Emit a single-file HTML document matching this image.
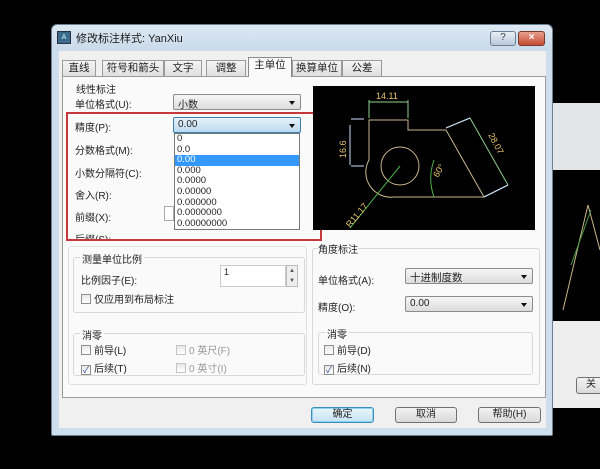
<!DOCTYPE html>
<html><head><meta charset="utf-8"><style>
*{margin:0;padding:0;box-sizing:border-box}
body{width:600px;height:469px;background:#000;position:relative;overflow:hidden;font-family:"Liberation Sans","Noto Sans CJK SC",sans-serif;font-size:10px;color:#222}
.a{position:absolute}
.lbl{position:absolute;font-size:10px;color:#222;white-space:nowrap}
.combo{position:absolute;height:16px;border:1px solid #8c8c8c;background:linear-gradient(#f6f6f6,#dcdcdc);font-size:10px;padding:1px 4px;border-radius:2px}
.combo:after{content:"";position:absolute;right:5px;top:6px;border:3px solid transparent;border-top:4px solid #111}
.grp{position:absolute;border:1px solid #d8d8d8;border-radius:3px}
.gt{position:absolute;background:#fafafa;padding:0 2px;font-size:10px;top:-7px;left:6px}
.cb{display:inline-block;width:10px;height:10px;border:1px solid #8f8f8f;background:linear-gradient(#e8e8e8,#fff);vertical-align:-1px;margin-right:3px;font-size:9px;line-height:8px;color:#2a4a9a;text-align:center}
.btn{position:absolute;height:16px;border:1px solid #707070;border-radius:3px;background:linear-gradient(#f2f2f2,#dadada);text-align:center;font-size:10px;line-height:14px}
.tab{position:absolute;top:60px;height:17px;border:1px solid #9a9a9a;border-bottom:none;background:linear-gradient(#f4f4f4,#dedede);font-size:10.5px;text-align:center;line-height:15px}
</style></head><body>
<!-- background window right -->
<div class="a" style="left:553px;top:103px;width:47px;height:67px;background:#e3e5e8"></div>
<div class="a" style="left:553px;top:170px;width:47px;height:151px;background:#000">
<svg width="47" height="151"><path d="M10 140 L35 35 L47 80" stroke="#c8b78a" fill="none"/><path d="M18 95 L38 40" stroke="#4a9a4a" fill="none"/></svg></div>
<div class="a" style="left:553px;top:321px;width:47px;height:87px;background:#eeeeee"></div>
<div class="btn" style="left:576px;top:377px;width:30px;height:17px">关</div>

<!-- dialog -->
<div class="a" style="left:51px;top:24px;width:502px;height:412px;background:#cfdeed;border:1px solid #6d7f92;border-radius:6px 6px 2px 2px"></div>
<div class="a" style="left:52px;top:25px;width:500px;height:26px;background:linear-gradient(#dde8f3,#c9daea);border-radius:6px 6px 0 0"></div>
<div class="a" style="left:57px;top:31px;width:14px;height:13px;background:#3c6a8a;border:1px solid #234;color:#cfe;font-size:7px;line-height:11px;text-align:center">A</div>
<div class="lbl" style="left:76px;top:30px;font-size:11px;color:#1a1a1a">修改标注样式: YanXiu</div>
<div class="a" style="left:490px;top:31px;width:26px;height:15px;border:1px solid #6d7f92;border-radius:3px;background:linear-gradient(#e8eef5,#b9c9da);text-align:center;font-size:10px;color:#345">?</div>
<div class="a" style="left:518px;top:31px;width:27px;height:15px;border:1px solid #7a3a2e;border-radius:3px;background:linear-gradient(#e9a08d,#c44c33);text-align:center;font-size:10px;color:#fff;font-weight:bold">×</div>
<div class="a" style="left:59px;top:51px;width:487px;height:377px;background:#f0f0f0"></div>

<!-- tabs -->
<div class="tab" style="left:62px;width:34px">直线</div>
<div class="tab" style="left:102px;width:62px">符号和箭头</div>
<div class="tab" style="left:164px;width:38px">文字</div>
<div class="tab" style="left:206px;width:40px">调整</div>
<div class="tab" style="left:292px;width:50px">换算单位</div>
<div class="tab" style="left:342px;width:40px">公差</div>
<!-- panel -->
<div class="a" style="left:62px;top:76px;width:484px;height:322px;background:#fafafa;border:1px solid #9a9a9a"></div>
<div class="tab" style="left:248px;top:57px;width:44px;height:20px;background:#fafafa;border-color:#8a8a8a">主单位</div>

<!-- left upper -->
<div class="lbl" style="left:76px;top:81px">线性标注</div>
<div class="lbl" style="left:75px;top:96px">单位格式(U):</div>
<div class="combo" style="left:173px;top:94px;width:128px">小数</div>
<div class="lbl" style="left:75px;top:119px">精度(P):</div>
<div class="lbl" style="left:75px;top:142px">分数格式(M):</div>
<div class="lbl" style="left:75px;top:165px">小数分隔符(C):</div>
<div class="lbl" style="left:75px;top:187px">舍入(R):</div>
<div class="lbl" style="left:75px;top:209px">前缀(X):</div>
<div class="a" style="left:164px;top:206px;width:10px;height:15px;border:1px solid #aaa;background:#fff"></div>
<div class="lbl" style="left:75px;top:231px;height:8px;overflow:hidden">后缀(S):</div>
<div class="combo" style="left:173px;top:117px;width:128px;background:linear-gradient(#e6f2fb,#bcd9f0);border-color:#3c7fb1">0.00</div>
<div class="a" style="left:174px;top:133px;width:126px;height:97px;background:#fff;border:1px solid #777;font-size:9.5px;line-height:10.6px;padding-left:2px">
0<br>0.0<br><span style="display:block;background:#3399ff;color:#fff;margin-left:-2px;padding-left:2px">0.00</span>0.000<br>0.0000<br>0.00000<br>0.000000<br>0.0000000<br>0.00000000</div>
<div class="a" style="left:66px;top:112px;width:256px;height:129px;border:2px solid #c8383a"></div>

<!-- preview -->
<div class="a" style="left:313px;top:86px;width:222px;height:144px;background:#000">
<svg width="222" height="144" viewBox="313 86 222 144">
<g fill="none" stroke-width="1">
<path d="M369 120 L369 160 A25 25 0 0 0 394 197 L484 197 L446 130 L408 130 L408 120 Z" stroke="#c9b68c"/>
<circle cx="400" cy="166" r="19" stroke="#c9b68c"/>
<path d="M369 100 L369 118 M408 100 L408 118 M369 102 L408 102" stroke="#8fd08f"/>
<path d="M351 119 L364 119 M351 166 L364 166 M350 125 L350 165" stroke="#cfe0ff"/>
<path d="M446 128 L470 118 M484 197 L508 185 M470 118 L508 185" stroke="#8fd08f"/>
<path d="M446 128 L470 118 M484 197 L508 185" stroke="#cfe0ff"/>
<path d="M350 228 L400 166" stroke="#4ab04a"/>
<path d="M434 160 A55 55 0 0 0 434 197" stroke="#4ab04a"/>
</g>
<g font-family="Liberation Sans" font-size="9" fill="#e8c46a">
<text x="376" y="99">14.11</text>
<text x="346" y="158" transform="rotate(-90 346 158)">16.6</text>
<text x="488" y="135" transform="rotate(62 488 135)">28.07</text>
<text x="438" y="178" transform="rotate(-60 438 178)">60°</text>
<text x="350" y="228" transform="rotate(-50 350 228)">R11.17</text>
</g></svg></div>

<!-- bottom left -->
<div class="a" style="left:68px;top:246px;width:239px;height:139px;border:1px solid #e0e0e0;border-radius:3px"></div>
<div class="grp" style="left:73px;top:257px;width:232px;height:56px"><span class="gt">测量单位比例</span></div>
<div class="lbl" style="left:81px;top:272px">比例因子(E):</div>
<div class="a" style="left:220px;top:265px;width:66px;height:22px;border:1px solid #ccc;background:#fff;font-size:9px;padding:1px 3px">1</div>
<div class="a" style="left:286px;top:265px;width:12px;height:22px;border:1px solid #bbb;background:#eee;font-size:6px;line-height:10px;text-align:center;color:#555">▲<br>▼</div>
<div class="lbl" style="left:81px;top:291px"><span class="cb"></span>仅应用到布局标注</div>
<div class="grp" style="left:73px;top:333px;width:232px;height:43px"><span class="gt">消零</span></div>
<div class="lbl" style="left:81px;top:342px"><span class="cb"></span>前导(L)</div>
<div class="lbl" style="left:81px;top:360px"><span class="cb">✓</span>后续(T)</div>
<div class="lbl" style="left:176px;top:342px;color:#999"><span class="cb" style="border-color:#c4c4c4"></span>0 英尺(F)</div>
<div class="lbl" style="left:176px;top:360px;color:#999"><span class="cb" style="border-color:#c4c4c4"></span>0 英寸(I)</div>

<!-- bottom right -->
<div class="grp" style="left:312px;top:248px;width:228px;height:137px"></div>
<div class="lbl" style="left:318px;top:241px;background:#fafafa">角度标注</div>
<div class="lbl" style="left:318px;top:272px">单位格式(A):</div>
<div class="combo" style="left:405px;top:268px;width:128px;font-size:10.5px">十进制度数</div>
<div class="lbl" style="left:318px;top:299px">精度(O):</div>
<div class="combo" style="left:405px;top:296px;width:128px">0.00</div>
<div class="grp" style="left:318px;top:332px;width:215px;height:43px"><span class="gt">消零</span></div>
<div class="lbl" style="left:324px;top:342px"><span class="cb"></span>前导(D)</div>
<div class="lbl" style="left:324px;top:360px"><span class="cb">✓</span>后续(N)</div>

<!-- buttons -->
<div class="btn" style="left:311px;top:407px;width:63px;border-color:#3c8fb8;background:linear-gradient(#eaf6fc,#c5e3f3);box-shadow:0 0 0 1px #8fd0ee inset">确定</div>
<div class="btn" style="left:395px;top:407px;width:62px">取消</div>
<div class="btn" style="left:478px;top:407px;width:63px">帮助(H)</div>
</body></html>
